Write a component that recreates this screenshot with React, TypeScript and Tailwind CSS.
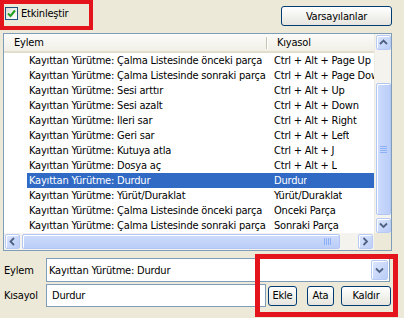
import React from 'react'

const rows: [string, string][] = [
  ['Kayıttan Yürütme: Çalma Listesinde önceki parça', 'Ctrl + Alt + Page Up'],
  ['Kayıttan Yürütme: Çalma Listesinde sonraki parça', 'Ctrl + Alt + Page Down'],
  ['Kayıttan Yürütme: Sesi arttır', 'Ctrl + Alt + Up'],
  ['Kayıttan Yürütme: Sesi azalt', 'Ctrl + Alt + Down'],
  ['Kayıttan Yürütme: İleri sar', 'Ctrl + Alt + Right'],
  ['Kayıttan Yürütme: Geri sar', 'Ctrl + Alt + Left'],
  ['Kayıttan Yürütme: Kutuya atla', 'Ctrl + Alt + J'],
  ['Kayıttan Yürütme: Dosya aç', 'Ctrl + Alt + L'],
  ['Kayıttan Yürütme: Durdur', 'Durdur'],
  ['Kayıttan Yürütme: Yürüt/Duraklat', 'Yürüt/Duraklat'],
  ['Kayıttan Yürütme: Çalma Listesinde önceki parça', 'Önceki Parça'],
  ['Kayıttan Yürütme: Çalma Listesinde sonraki parça', 'Sonraki Parça'],
]
const SELECTED = 8

type Dir = 'up' | 'down' | 'left' | 'right'

const arrowPath: Record<Dir, string> = {
  up: 'M1 5 L4.5 1.5 L8 5',
  down: 'M1 1.5 L4.5 5 L8 1.5',
  left: 'M5 1 L1.5 4.5 L5 8',
  right: 'M1.5 1 L5 4.5 L1.5 8',
}

function Arrow({ dir }: { dir: Dir }) {
  const vertical = dir === 'up' || dir === 'down'
  return (
    <svg width={vertical ? 9 : 7} height={vertical ? 7 : 9} viewBox={vertical ? '0 0 9 7' : '0 0 7 9'}>
      <path d={arrowPath[dir]} fill="none" stroke="#4D6185" strokeWidth="1.8" />
    </svg>
  )
}

function ScrollBtn({ dir, className = '' }: { dir: Dir; className?: string }) {
  return (
    <div
      className={`w-[15px] h-[15px] shrink-0 rounded-[2px] border border-[#B7CAF5] bg-linear-to-br from-[#DCE6FD] to-[#BACDF7] shadow-[inset_1px_1px_0_#fff] flex items-center justify-center ${className}`}
    >
      <Arrow dir={dir} />
    </div>
  )
}

function XpButton({ children, className = '' }: { children: React.ReactNode; className?: string }) {
  return (
    <button className={`h-[20px] shrink-0 rounded-[3px] border border-[#003C74] bg-linear-to-b from-white to-[#E6E5DE] text-[11px] leading-none text-black ${className}`}>
      {children}
    </button>
  )
}

export default function App() {
  return (
    <div className="relative w-[404px] h-[318px] overflow-hidden bg-[#ECE9D8] text-[11px] leading-none tracking-[-0.2px] text-black font-['DejaVu_Sans_Condensed','DejaVu_Sans',sans-serif]">
      {/* top bar */}
      <div className="flex h-[33px] items-start justify-between">
        <label className="flex items-center gap-[3px] pl-[5px] pt-[7px]">
          <span className="w-[13px] h-[13px] border border-[#1C5180] bg-linear-to-br from-[#DCDCD7] to-white flex items-center justify-center">
            <svg width="9" height="9" viewBox="0 0 9 9">
              <path d="M1 4.5 L3.5 7 L8 1.5" fill="none" stroke="#21A121" strokeWidth="2" />
            </svg>
          </span>
          <span>Etkinleştir</span>
        </label>
        <XpButton className="mt-[6px] mr-[12px] w-[111px] h-[20px]">Varsayılanlar</XpButton>
      </div>

      {/* list view */}
      <div className="ml-[3px] w-[389px] h-[218px] border border-[#7F9DB9] bg-white flex flex-col">
        <div className="flex flex-1 min-h-0">
          <div className="flex-1 min-w-0 flex flex-col overflow-hidden">
            <div className="h-[19px] shrink-0 flex bg-linear-to-b from-[#FBFBF9] to-[#F1EFE6] border-b-[2px] border-[#E2DECD]">
              <div className="w-[264px] flex items-center pl-[10px] relative">
                Eylem
                <span className="absolute right-0 top-[3px] h-[12px] w-[2px] border-l border-[#C7C5B2] bg-white" />
              </div>
              <div className="flex items-center pl-[9px]">Kıyasol</div>
            </div>
            {rows.map(([action, key], i) => {
              const sel = i === SELECTED
              return (
                <div key={i} className="h-[15px] shrink-0 flex pl-[23px]">
                  <div className={`flex flex-1 items-center ${sel ? 'bg-[#316AC5] text-white' : ''}`}>
                    <div className="w-[241px] shrink-0 pl-[2px] whitespace-nowrap overflow-hidden">{action}</div>
                    <div className="pl-[6px] whitespace-nowrap overflow-hidden">{key}</div>
                  </div>
                </div>
              )
            })}
          </div>
          {/* vertical scrollbar */}
          <div className="w-[17px] shrink-0 flex flex-col items-center bg-[#F4F3EE] border-l border-[#EEEDE5] pt-[1px]">
            <ScrollBtn dir="up" />
            <div className="h-[33px]" />
            <div className="w-[15px] h-[132px] rounded-[2px] border border-[#B1C6F5] bg-linear-to-r from-[#CDDBFC] to-[#BBCEF8] shadow-[inset_1px_1px_0_#fff] flex flex-col items-center justify-center gap-[1px]">
              {[0, 1, 2, 3].map((n) => (
                <span key={n} className="w-[7px] h-[1px] bg-[#EEF4FE] border-b border-[#8CB0F8]" />
              ))}
            </div>
            <div className="h-[3px]" />
            <ScrollBtn dir="down" />
          </div>
        </div>
        {/* horizontal scrollbar */}
        <div className="h-[17px] shrink-0 flex">
          <div className="w-[370px] flex items-center bg-[#F4F3EE] pl-[1px]">
            <ScrollBtn dir="left" />
            <div className="ml-[2px] w-[318px] h-[15px] rounded-[2px] border border-[#B1C6F5] bg-linear-to-b from-[#CDDBFC] to-[#BBCEF8] shadow-[inset_1px_1px_0_#fff] flex items-center justify-end pr-[8px] gap-[1px]">
              {[0, 1, 2, 3].map((n) => (
                <span key={n} className="w-[1px] h-[7px] bg-[#EEF4FE] border-r border-[#8CB0F8]" />
              ))}
            </div>
            <div className="flex-1" />
            <ScrollBtn dir="right" className="mr-[1px]" />
          </div>
          <div className="flex-1 bg-[#ECE9D8]" />
        </div>
      </div>

      {/* bottom fields */}
      <div className="mt-[7px] flex items-center h-[24px]">
        <div className="w-[46px] pl-[4px]">Eylem</div>
        <div className="w-[344px] h-[24px] border border-[#7F9DB9] bg-white flex items-center pl-[2px]">
          <span className="flex-1">Kayıttan Yürütme: Durdur</span>
          <ScrollBtn dir="down" className="mr-[1px] h-[20px] w-[17px]" />
        </div>
      </div>
      <div className="mt-[2px] flex items-center h-[23px]">
        <div className="w-[46px] pl-[4px]">Kısayol</div>
        <div className="w-[220px] h-[23px] border border-[#7F9DB9] bg-white flex items-center pl-[5px]">Durdur</div>
        <XpButton className="ml-[2px] w-[29px]">Ekle</XpButton>
        <XpButton className="ml-[10px] w-[27px]">Ata</XpButton>
        <XpButton className="ml-[7px] w-[50px]">Kaldır</XpButton>
      </div>

      {/* red highlight frames */}
      <div className="absolute left-0 top-0 w-[93px] h-[30px] border-[4px] border-[#E3141C]" />
      <div className="absolute left-[255px] top-[254px] w-[143px] h-[63px] border-[5px] border-[#E3141C]" />
    </div>
  )
}
